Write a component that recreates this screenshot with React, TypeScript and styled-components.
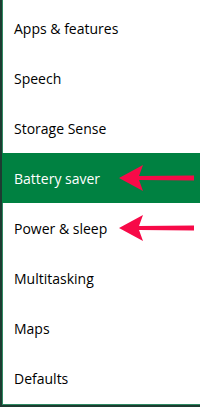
import styled, { createGlobalStyle } from "styled-components";

const GlobalStyle = createGlobalStyle`
  html, body {
    margin: 0;
    padding: 0;
    background: #ffffff;
  }
`;

const Panel = styled.nav`
  position: relative;
  width: 200px;
  height: 407px;
  box-sizing: border-box;
  padding-top: 3px;
  background: #ffffff;
  border-left: 2px solid #1d3b31;
  border-bottom: 2px solid #1d3b31;
  box-shadow: inset 1px -1px 0 #2f8a63;
  font-family: "Open Sans", "Noto Sans", sans-serif;
  overflow: hidden;
`;

const List = styled.ul`
  list-style: none;
  margin: 0;
  padding: 0;
  display: flex;
  flex-direction: column;
`;

const Item = styled.li<{ $active?: boolean }>`
  position: relative;
  display: flex;
  align-items: center;
  height: 50px;
  padding-left: 12px;
  font-size: 14px;
  color: ${(p) => (p.$active ? "#ffffff" : "#000000")};
  background: ${(p) => (p.$active ? "#008141" : "transparent")};
`;

const Arrow = styled.svg`
  position: absolute;
  left: 116px;
  top: 50%;
  width: 78px;
  height: 28px;
  margin-top: -14px;
`;

function PointerArrow() {
  return (
    <Arrow viewBox="0 0 78 28" aria-hidden="true">
      <path
        d="M1 14 L25 1 L21 12 L76 11.5 L76 16.5 L21 16 L25 27 Z"
        fill="#f70a48"
      />
    </Arrow>
  );
}

const items = [
  { label: "Apps & features" },
  { label: "Speech" },
  { label: "Storage Sense" },
  { label: "Battery saver", active: true, arrow: true },
  { label: "Power & sleep", arrow: true },
  { label: "Multitasking" },
  { label: "Maps" },
  { label: "Defaults" },
];

export default function App() {
  return (
    <>
      <GlobalStyle />
      <Panel>
        <List>
          {items.map((item) => (
            <Item key={item.label} $active={item.active}>
              {item.label}
              {item.arrow && <PointerArrow />}
            </Item>
          ))}
        </List>
      </Panel>
    </>
  );
}
